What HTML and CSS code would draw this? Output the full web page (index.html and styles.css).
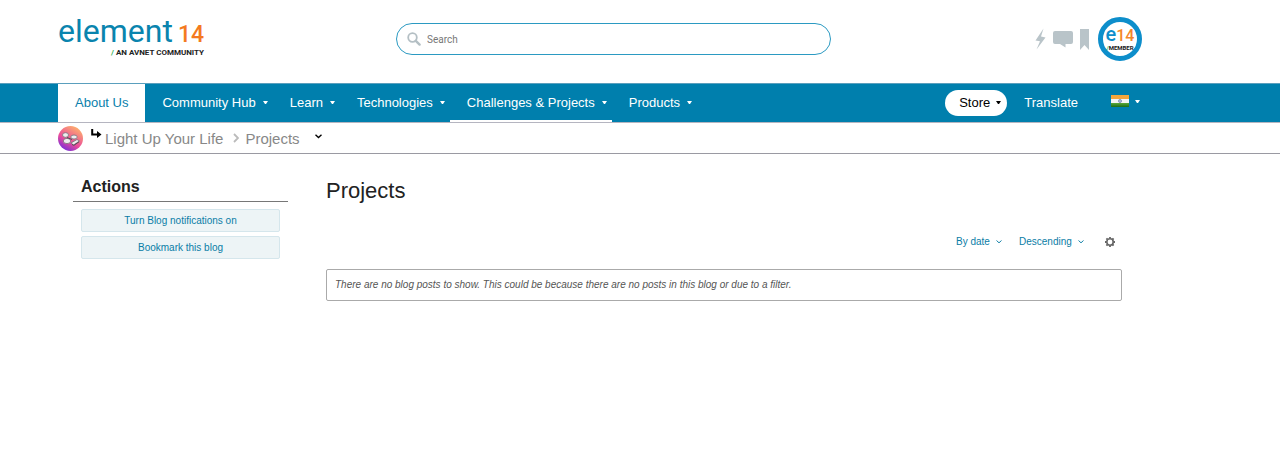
FILE: index.html
```
<!DOCTYPE html>
<html lang="en">
<head>
  <meta charset="UTF-8" />
  <meta name="viewport" content="width=device-width, initial-scale=1" />
  <title>Projects - element14 Community</title>
  <link rel="stylesheet" href="styles.css">
</head>
<body>

<!-- Header -->
<header class="site-header">
  <a href="#" class="logo">
    <span class="logo-name">element<span class="logo-number">14</span></span>
    <span class="logo-tagline"><span class="logo-slash">/</span> AN AVNET COMMUNITY</span>
  </a>

  <form class="search-form">
    <svg class="search-icon" viewBox="0 0 14 14" aria-hidden="true">
      <circle cx="5.5" cy="5.5" r="4.3" fill="none" stroke="#b4bfc4" stroke-width="1.8" />
      <path d="M8.8 8.8L12.6 12.6" stroke="#b4bfc4" stroke-width="2.4" stroke-linecap="round" />
    </svg>
    <input type="search" class="search-input" placeholder="Search" aria-label="Search">
  </form>

  <div class="user-links">
    <a href="#" aria-label="Notifications">
      <svg width="11" height="22" viewBox="0 0 11 22"><path d="M8.500.5L.5 12.500l4.500.8L1.500 21.500 10.500 9.500l-4.500-1z" fill="#b9c4c9" /></svg>
    </a>
    <a href="#" aria-label="Conversations">
      <svg width="20" height="18" viewBox="0 0 20 18"><path d="M2 1h16q2 0 2 2v9q0 2-2 2h-5.500v3.500L7 14H2q-2 0-2-2V3q0-2 2-2z" fill="#b9c4c9" /></svg>
    </a>
    <a href="#" aria-label="Bookmarks">
      <svg width="9" height="21" viewBox="0 0 9 21"><path d="M0 0h9v21l-4.500-5L0 21z" fill="#b9c4c9" /></svg>
    </a>
    <a href="#" class="avatar" aria-label="Profile">
      <span class="avatar-name">e<span class="avatar-number">14</span></span>
      <span class="avatar-role"><span class="logo-slash">/</span>MEMBER</span>
    </a>
  </div>
</header>

<!-- Main navigation -->
<nav class="main-nav">
  <a href="#" class="nav-item active">About Us</a>
  <a href="#" class="nav-item">Community Hub <span class="caret"></span></a>
  <a href="#" class="nav-item">Learn <span class="caret"></span></a>
  <a href="#" class="nav-item">Technologies <span class="caret"></span></a>
  <a href="#" class="nav-item current">Challenges &amp; Projects <span class="caret"></span></a>
  <a href="#" class="nav-item">Products <span class="caret"></span></a>
  <div class="nav-right">
    <button type="button" class="store-button">Store <span class="caret"></span></button>
    <a href="#" class="translate-link">Translate</a>
    <button type="button" class="flag-button" aria-label="Country">
      <svg width="18" height="12" viewBox="0 0 18 12">
        <defs>
          <linearGradient id="greenBand" x1="0" y1="0" x2="0" y2="1">
            <stop offset="0" stop-color="#5aa838" />
            <stop offset="1" stop-color="#1d6d18" />
          </linearGradient>
        </defs>
        <rect width="18" height="4" fill="#f5a63c" />
        <rect y="4" width="18" height="4" fill="#f5f5f5" />
        <rect y="8" width="18" height="4" fill="url(#greenBand)" />
        <circle cx="9" cy="6" r="1.500" fill="#b9c2df" stroke="#6674aa" stroke-width=".7" />
      </svg>
      <span class="caret"></span>
    </button>
  </div>
</nav>

<!-- Breadcrumb -->
<nav class="breadcrumb" aria-label="Breadcrumb">
  <svg width="25" height="25" viewBox="0 0 25 25" aria-hidden="true">
    <defs>
      <linearGradient id="groupFill" x1="0.200" y1="1" x2="0.800" y2="0">
        <stop offset="0" stop-color="#6a2be0" />
        <stop offset="0.400" stop-color="#ea4b9b" />
        <stop offset="1" stop-color="#ffb869" />
      </linearGradient>
    </defs>
    <circle cx="12.500" cy="12.500" r="12.500" fill="url(#groupFill)" />
    <g fill="#eee" stroke="#77707a" stroke-width=".8">
      <ellipse cx="7.500" cy="9" rx="3" ry="2.300" />
      <ellipse cx="9" cy="15" rx="3.700" ry="2.600" />
      <ellipse cx="16" cy="11" rx="3.200" ry="2" />
      <path d="M13 17l6-3.500 2.500 1.500-6 4z" />
    </g>
    <path d="M9 11.500l5 2M14 18.500l2 .8 5-3.500" stroke="#574b58" fill="none" />
  </svg>
  <svg class="reply-arrow" width="11" height="11" viewBox="0 0 11 11" aria-hidden="true">
    <path d="M1.200 0v5.500H8" fill="none" stroke="#000" stroke-width="2" />
    <path d="M6 2l4.500 3.500L6 9z" />
  </svg>
  <a href="#">Light Up Your Life</a>
  <svg class="separator" width="6" height="10" viewBox="0 0 6 10" aria-hidden="true">
    <path d="M1 1l4 4-4 4" fill="none" stroke="#bbb" stroke-width="1.800" />
  </svg>
  <a href="#">Projects</a>
  <button type="button" class="more-button" aria-label="More">
    <svg width="7" height="5" viewBox="0 0 7 5"><path d="M.5.8l3 2.700 3-2.700" fill="none" stroke="#000" stroke-width="1.400" /></svg>
  </button>
</nav>

<!-- Content -->
<div class="content">
  <aside class="sidebar">
    <h2>Actions</h2>
    <div class="actions">
      <button type="button" class="action-button">Turn Blog notifications on</button>
      <button type="button" class="action-button">Bookmark this blog</button>
    </div>
  </aside>

  <main class="blog">
    <h1>Projects</h1>
    <div class="filters">
      <div class="filter">
        <select aria-label="Sort by">
          <option>By date</option>
        </select>
        <svg width="6" height="4" viewBox="0 0 6 4" aria-hidden="true"><path d="M.5.500L3 2.800 5.500.5" fill="none" stroke="#1582a9" /></svg>
      </div>
      <div class="filter">
        <select aria-label="Sort order">
          <option>Descending</option>
        </select>
        <svg width="6" height="4" viewBox="0 0 6 4" aria-hidden="true"><path d="M.5.500L3 2.800 5.500.5" fill="none" stroke="#1582a9" /></svg>
      </div>
      <button type="button" class="settings-button" aria-label="Settings">
        <svg width="10" height="10" viewBox="0 0 10 10">
          <circle cx="5" cy="5" r="3.200" fill="none" stroke="#666" stroke-width="1.600" />
          <path d="M5 0v1.500M5 8.500V10M0 5h1.500M8.500 5H10M1.400 1.400l1.100 1.100M7.500 7.500l1.100 1.100M1.400 8.600l1.100-1.100M7.500 2.500l1.100-1.100" stroke="#666" stroke-width="1.800" />
        </svg>
      </button>
    </div>
    <p class="empty-message">There are no blog posts to show. This could be because there are no posts in this blog or due to a filter.</p>
  </main>
</div>

</body>
</html>
```
FILE: styles.css
```
* {
  box-sizing: border-box;
}

body {
  margin: 0;
  background: #fff;
  color: #222;
  font-family: "Liberation Sans", Arial, sans-serif;
  font-size: 10px;
}

a {
  text-decoration: none;
}

button {
  padding: 0;
  border: none;
  background: none;
  font-family: inherit;
  cursor: pointer;
}

svg {
  display: block;
  flex: none;
}

.site-header,
.main-nav,
.breadcrumb,
.content {
  padding-left: 58px;
  padding-right: 138px;
}

/* Header */
.site-header {
  display: grid;
  grid-template-columns: 338px 1fr 311px;
  align-items: center;
  padding-top: 17px;
  padding-bottom: 22px;
}

.logo {
  justify-self: start;
  display: flex;
  flex-direction: column;
  align-items: flex-end;
  padding-bottom: 4px;
  font-family: Roboto, sans-serif;
}

.logo-name {
  color: #0a84ae;
  font-size: 32px;
  line-height: 28px;
}

.logo-number {
  margin-left: 5px;
  color: #f47a20;
  font-size: 23px;
  font-weight: 500;
}

.logo-tagline {
  color: #222;
  font-size: 8px;
  font-weight: bold;
  line-height: 8px;
}

.logo-slash {
  color: #2fb457;
}

.search-form {
  display: flex;
  align-items: center;
  gap: 5px;
  height: 32px;
  padding: 0 10px;
  border: 1px solid #2b9ac2;
  border-radius: 16px;
}

.search-icon {
  width: 14px;
  height: 14px;
}

.search-input {
  flex: 1;
  min-width: 0;
  padding: 0 1px;
  border: none;
  outline: none;
  background: none;
  font-family: Roboto, sans-serif;
  font-size: 10px;
}

.search-input::placeholder {
  color: #777;
}

.user-links {
  display: flex;
  align-items: center;
  justify-content: flex-end;
  gap: 7px;
}

.avatar {
  display: flex;
  flex-direction: column;
  align-items: center;
  justify-content: center;
  width: 44px;
  height: 44px;
  margin-left: 2px;
  border: 5px solid #0d8ecb;
  border-radius: 50%;
  font-family: Roboto, sans-serif;
}

.avatar-name {
  color: #0d8ecb;
  font-size: 20px;
  font-weight: 500;
  line-height: 16px;
}

.avatar-number {
  color: #f4862a;
  font-size: 16px;
}

.avatar-role {
  color: #222;
  font-size: 6px;
  font-weight: bold;
  line-height: 8px;
}

/* Main navigation */
.main-nav {
  display: flex;
  align-items: stretch;
  height: 40px;
  background: #007fad;
  border-top: 1px solid #5a9fbd;
  border-bottom: 1px solid #b5b5c0;
}

.nav-item {
  display: flex;
  align-items: center;
  gap: 7px;
  padding: 0 5px 0 17px;
  border-bottom: 2px solid transparent;
  color: #fff;
  font-size: 13px;
  white-space: nowrap;
}

.nav-item.active {
  padding-right: 17px;
  border-bottom-color: #fff;
  background: #fff;
  color: #0a80ab;
}

.nav-item.current {
  border-bottom-color: #fff;
}

.caret {
  width: 5px;
  border: 2px solid transparent;
  border-top: 3px solid currentColor;
  border-bottom: none;
}

.nav-right {
  display: flex;
  align-items: center;
  margin-left: auto;
  padding-bottom: 1px;
}

.store-button {
  display: flex;
  align-items: center;
  gap: 6px;
  height: 26px;
  padding: 0 6px 0 14px;
  border-radius: 13px;
  background: #fff;
  color: #000;
  font-size: 13px;
}

.translate-link {
  margin-left: 17px;
  color: #fff;
  font-size: 13px;
}

.flag-button {
  display: flex;
  align-items: center;
  gap: 6px;
  margin: 0 2px 3px 33px;
  color: #fff;
}

/* Breadcrumb */
.breadcrumb {
  display: flex;
  align-items: center;
  height: 31px;
  border-bottom: 1px solid #9a9aa2;
}

.breadcrumb a {
  color: #888;
  font-size: 15px;
}

.reply-arrow {
  margin: 0 3px 8px 8px;
}

.separator {
  margin: 0 6px 0 10px;
}

.more-button {
  margin: 0 0 4px 15px;
}

/* Content */
.content {
  display: flex;
  gap: 38px;
  padding-top: 23px;
}

.sidebar {
  width: 215px;
  margin-left: 15px;
}

.sidebar h2 {
  margin: 0;
  padding: 0 8px 5px;
  border-bottom: 1px solid #777;
  font-size: 16px;
  line-height: 19px;
}

.actions {
  display: flex;
  flex-direction: column;
  gap: 4px;
  padding: 7px 8px;
}

.action-button {
  height: 23px;
  border: 1px solid #d5e6ec;
  border-radius: 2px;
  background: #edf4f6;
  color: #0a7da6;
  font-size: 10px;
}

.blog {
  flex: 1;
  margin-right: 20px;
}

.blog h1 {
  margin: 0;
  font-size: 22px;
  font-weight: normal;
  line-height: 28px;
}

.filters {
  display: flex;
  align-items: center;
  justify-content: flex-end;
  gap: 17px;
  margin-top: 30px;
  padding-right: 7px;
}

.filter {
  display: flex;
  align-items: center;
  gap: 6px;
}

.filter select {
  appearance: none;
  padding: 0;
  border: none;
  background: none;
  color: #0a7da6;
  font-family: inherit;
  font-size: 10px;
  line-height: 14px;
}

.settings-button {
  margin-left: 4px;
}

.empty-message {
  margin: 20px 0 0;
  padding: 8px;
  border: 1px solid #aaa;
  border-radius: 2px;
  color: #555;
  font-style: italic;
  line-height: 14px;
}
```
